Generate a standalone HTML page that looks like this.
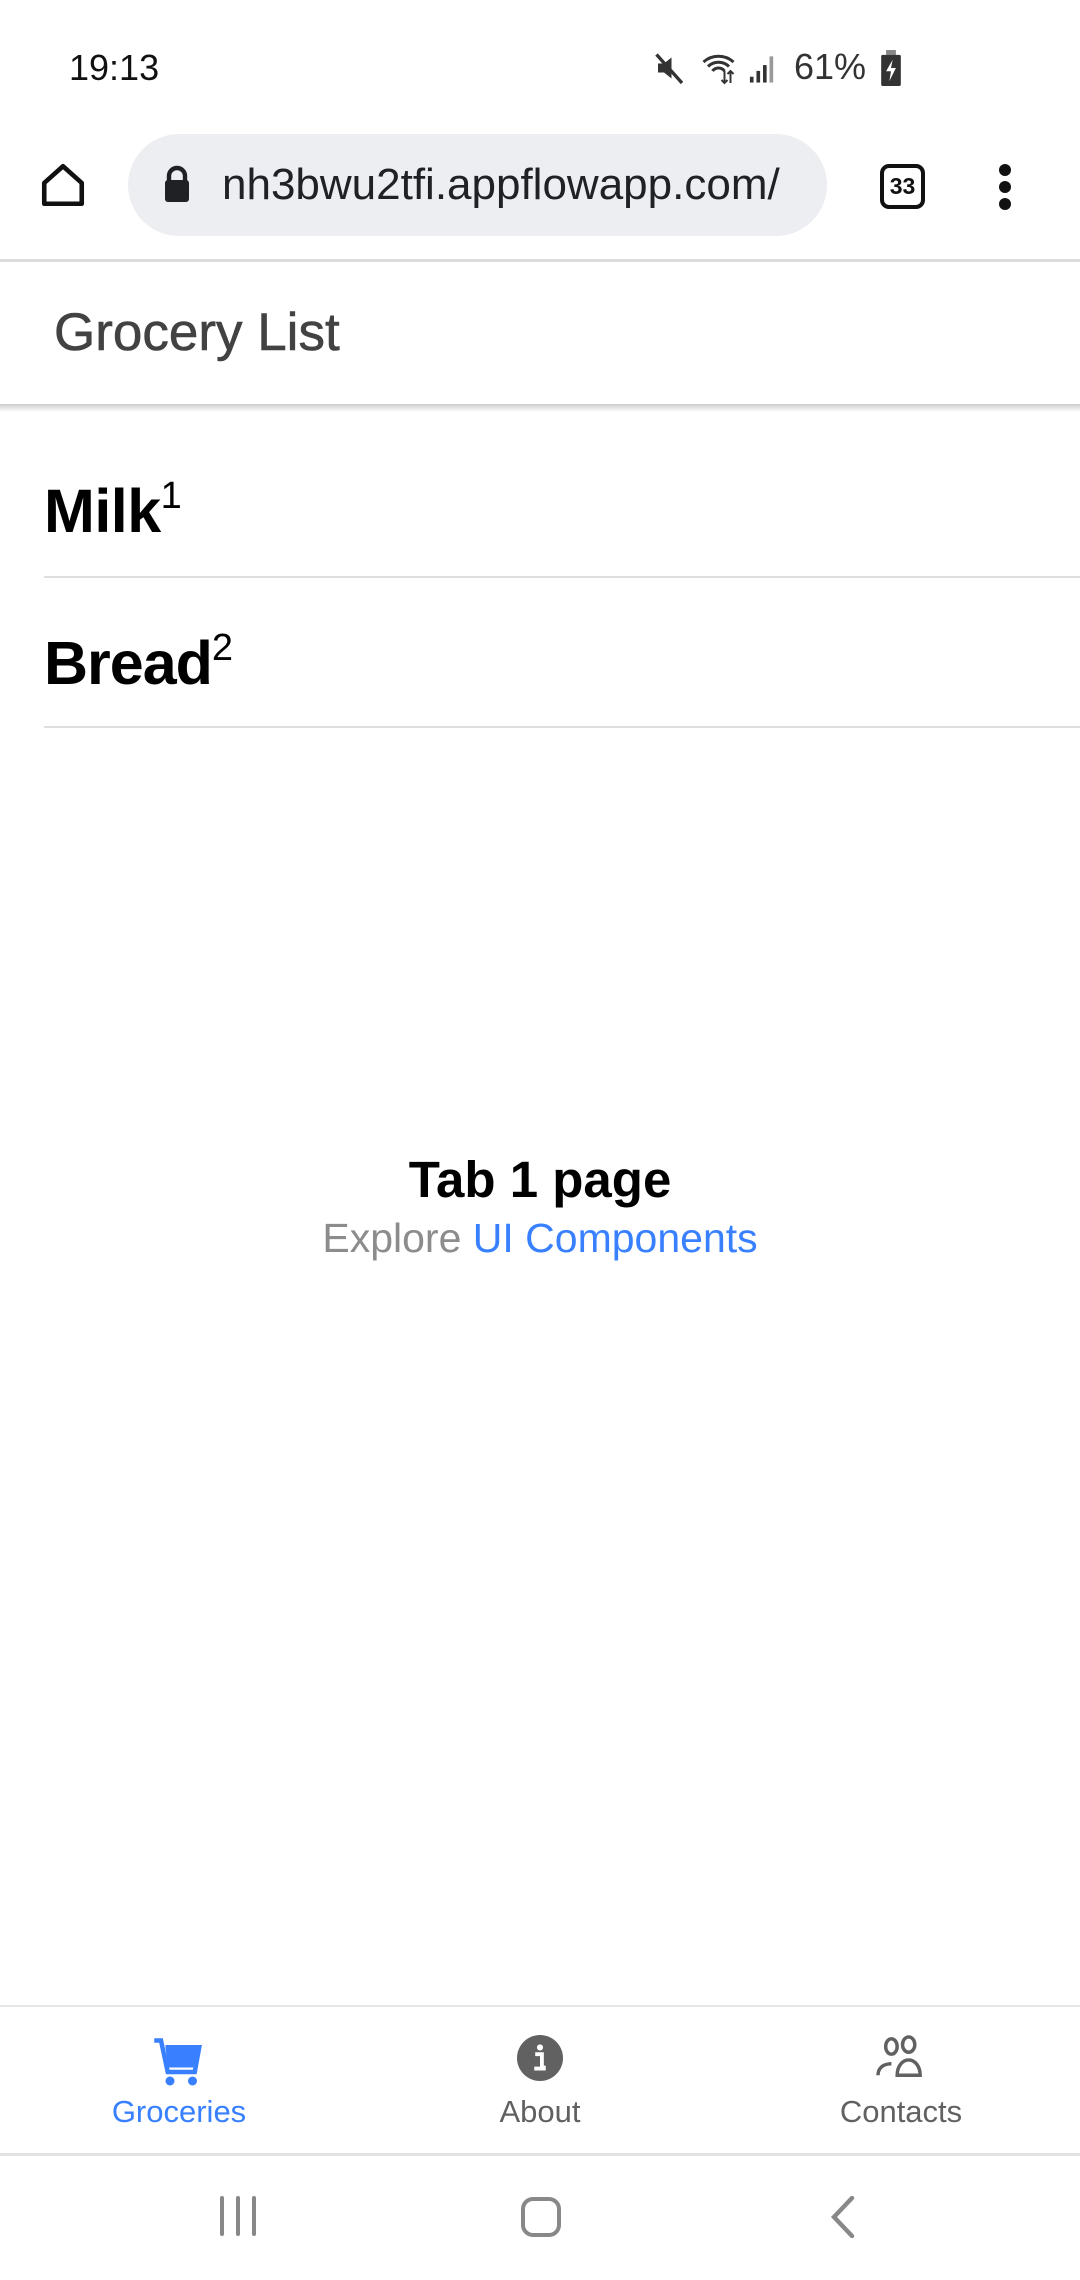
<!DOCTYPE html>
<html><head><meta charset="utf-8"><style>
*{margin:0;padding:0;box-sizing:border-box}
body{width:1080px;height:2280px;background:#fff;font-family:"Liberation Sans",sans-serif;position:relative;overflow:hidden}
.a{position:absolute;white-space:nowrap}
</style></head><body>
<div class="a" style="left:69px;top:47px;font-size:36px;color:#111">19:13</div>
<svg class="a" style="left:652px;top:50px" width="36" height="36" viewBox="0 0 24 24"><path d="M4 9h4l5-4v14l-5-4H4z" fill="#333"/><path d="M3 3l17 19" stroke="#333" stroke-width="2.2"/></svg>
<svg class="a" style="left:700px;top:50px" width="40" height="36" viewBox="0 0 26 24"><path d="M2 8a15 15 0 0 1 20 0M5 11a10 10 0 0 1 14 0M8 14a5 5 0 0 1 8 0" stroke="#333" stroke-width="2" fill="none"/><path d="M16 14v8M14 20l2 2 2-2M20 22v-8M18 16l2-2 2 2" stroke="#333" stroke-width="1.3" fill="none"/></svg>
<svg class="a" style="left:748px;top:52px" width="30" height="32" viewBox="0 0 20 22"><rect x="1" y="17" width="2.5" height="4" fill="#333"/><rect x="5.5" y="13" width="2.5" height="8" fill="#333"/><rect x="10" y="9" width="2.5" height="12" fill="#333"/><rect x="14.5" y="3" width="2.5" height="18" fill="#999"/></svg>
<div class="a" style="left:794px;top:46px;font-size:36px;color:#333">61%</div>
<svg class="a" style="left:878px;top:50px" width="26" height="36" viewBox="0 0 14 22"><rect x="4" y="0" width="6" height="3" fill="#888"/><rect x="1" y="3" width="12" height="19" rx="1" fill="#333"/><path d="M8 6l-4 7h3l-1 6 4-8H7z" fill="#fff"/></svg>

<svg class="a" style="left:38px;top:160px" width="50" height="50" viewBox="0 0 24 24"><path d="M3 11L12 3l9 8v10H3z" stroke="#111" stroke-width="2.2" fill="none" stroke-linejoin="round"/></svg>
<div class="a" style="left:128px;top:134px;width:699px;height:102px;border-radius:51px;background:#edeef1"></div>
<svg class="a" style="left:160px;top:164px" width="34" height="40" viewBox="0 0 16 20"><path d="M4 9V6a4 4 0 0 1 8 0v3" stroke="#202124" stroke-width="2.2" fill="none"/><rect x="2" y="8" width="12" height="11" rx="1.5" fill="#202124"/></svg>
<div class="a" style="left:222px;top:160px;width:586px;overflow:hidden;font-size:44px;color:#202124">nh3bwu2tfi.appflowapp.com/</div>
<div class="a" style="left:880px;top:164px;width:45px;height:45px;border:4px solid #111;border-radius:9px;font-size:23px;font-weight:bold;text-align:center;line-height:37px;color:#111">33</div>
<div class="a" style="left:999px;top:164px;width:12px;height:12px;border-radius:6px;background:#111"></div>
<div class="a" style="left:999px;top:181px;width:12px;height:12px;border-radius:6px;background:#111"></div>
<div class="a" style="left:999px;top:198px;width:12px;height:12px;border-radius:6px;background:#111"></div>
<div class="a" style="left:0;top:259px;width:1080px;height:3px;background:#dcdcdc"></div>

<div class="a" style="left:54px;top:302px;font-size:53px;color:#424242;-webkit-text-stroke:0.6px #424242">Grocery List</div>
<div class="a" style="left:0;top:404px;width:1080px;height:8px;background:linear-gradient(#ccc,rgba(255,255,255,0))"></div>

<div class="a" style="left:44px;top:476px;font-size:61px;font-weight:bold;color:#000;letter-spacing:-0.5px">Milk<sup style="font-size:38px;font-weight:normal;vertical-align:0;position:relative;top:-24px">1</sup></div>
<div class="a" style="left:44px;top:576px;width:1036px;height:2px;background:#dedede"></div>
<div class="a" style="left:44px;top:628px;font-size:61px;font-weight:bold;color:#000;letter-spacing:-1px">Bread<sup style="font-size:38px;font-weight:normal;vertical-align:0;position:relative;top:-24px">2</sup></div>
<div class="a" style="left:44px;top:726px;width:1036px;height:2px;background:#dedede"></div>

<div class="a" style="left:0;width:1080px;text-align:center;top:1150px;font-size:51px;font-weight:bold;color:#000">Tab 1 page</div>
<div class="a" style="left:0;width:1080px;text-align:center;top:1215px;font-size:41px;color:#8c8c8c">Explore <span style="color:#3880ff">UI Components</span></div>

<div class="a" style="left:0;top:2005px;width:1080px;height:2px;background:#e6e6e6"></div>
<svg class="a" style="left:152px;top:2036px" width="54" height="54" viewBox="0 0 24 24"><path d="M1 2h3l3 14h12l2-11H6" stroke="#3880ff" stroke-width="2" fill="none"/><path d="M6 5h15l-2 9H7z" fill="#3880ff"/><circle cx="8" cy="20" r="2" fill="#3880ff"/><circle cx="18" cy="20" r="2" fill="#3880ff"/></svg>
<div class="a" style="left:79px;width:200px;text-align:center;top:2094px;font-size:31px;color:#3880ff">Groceries</div>
<svg class="a" style="left:517px;top:2035px" width="46" height="46" viewBox="0 0 24 24"><circle cx="12" cy="12" r="12" fill="#616161"/><circle cx="12" cy="6.5" r="1.6" fill="#fff"/><path d="M9.5 10h3.5v7h2M9 17.5h6" stroke="#fff" stroke-width="2" fill="none"/></svg>
<div class="a" style="left:440px;width:200px;text-align:center;top:2094px;font-size:31px;color:#616161">About</div>
<svg class="a" style="left:874px;top:2035px" width="54" height="46" viewBox="0 0 28 24"><ellipse cx="9" cy="6" rx="3" ry="4" stroke="#616161" stroke-width="1.8" fill="none"/><ellipse cx="18" cy="5" rx="3.2" ry="4" stroke="#616161" stroke-width="1.8" fill="none"/><path d="M2 21c0-4 3-6 7-6M12 21c0-5 3-8 6-8s6 3 6 8z" stroke="#616161" stroke-width="1.8" fill="none"/></svg>
<div class="a" style="left:801px;width:200px;text-align:center;top:2094px;font-size:31px;color:#616161">Contacts</div>
<div class="a" style="left:0;top:2153px;width:1080px;height:3px;background:#e2e2e2"></div>

<div class="a" style="left:220px;top:2196px;width:4px;height:40px;background:#888;border-radius:2px"></div>
<div class="a" style="left:236px;top:2196px;width:4px;height:40px;background:#888;border-radius:2px"></div>
<div class="a" style="left:252px;top:2196px;width:4px;height:40px;background:#888;border-radius:2px"></div>
<div class="a" style="left:521px;top:2197px;width:40px;height:40px;border:4px solid #888;border-radius:12px"></div>
<svg class="a" style="left:830px;top:2196px" width="26" height="42" viewBox="0 0 13 21"><path d="M11 1L2 10.5 11 20" stroke="#888" stroke-width="2.2" fill="none" stroke-linecap="round"/></svg>
</body></html>
